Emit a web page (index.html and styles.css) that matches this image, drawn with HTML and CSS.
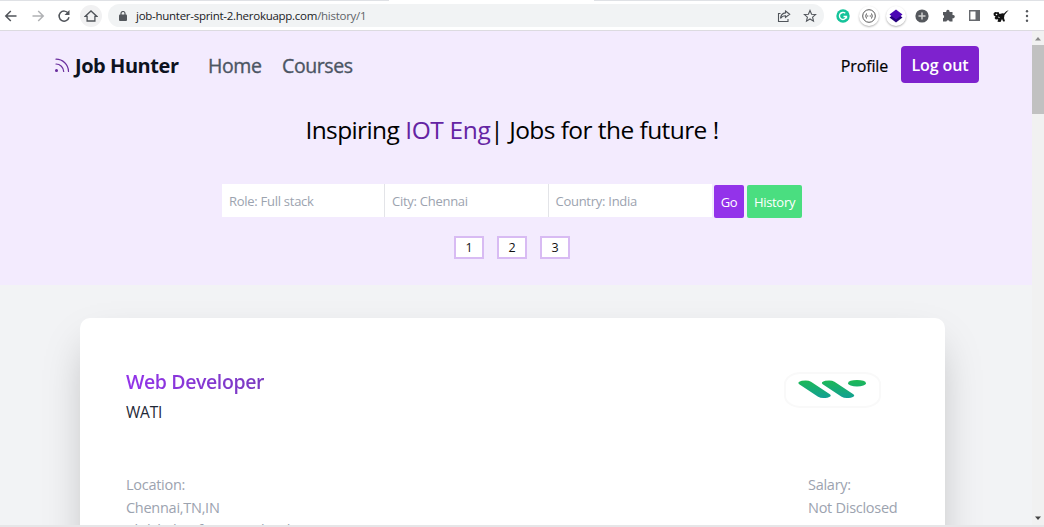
FILE: index.html
```html
<!DOCTYPE html>
<html lang="en">
<head>
<meta charset="utf-8">
<title>Job Hunter</title>
<link rel="stylesheet" href="styles.css">
</head>
<body>
<div class="window">
  <header class="toolbar">
    <nav class="nav-buttons">
      <span class="tool"><svg width="14" height="14" viewBox="0 0 14 14" class="line"><path d="M12.5 7H2M6.8 2 1.8 7l5 5"/></svg></span>
      <span class="tool faded"><svg width="14" height="14" viewBox="0 0 14 14" class="line"><path d="M1.5 7H12M7.2 2l5 5-5 5"/></svg></span>
      <span class="tool"><svg width="14" height="14" viewBox="0 0 14 14" class="line"><path d="M11.2 4.2A5 5 0 1 0 12 8.3"/><path d="M12.500 1v5h-5z" fill="#50545a" stroke="none"/></svg></span>
      <span class="tool"><span class="home"><svg width="14" height="14" viewBox="0 0 14 14" class="line house"><path d="M1.300 7.300 7 2l5.700 5.300H10.900V12H3.100V7.300z"/></svg></span></span>
    </nav>
    <div class="omnibox">
      <svg width="8" height="10" viewBox="0 0 8 10"><rect y="3.600" width="8" height="6.400" rx="1" fill="#54585d"/><path d="M2 4V2.500a2 2 0 0 1 4 0V4" fill="none" stroke="#54585d" stroke-width="1.200"/></svg>
      <span class="url">job-hunter-sprint-2.herokuapp.com<span class="path">/history/1</span></span>
      <svg class="share line thin" width="14" height="14" viewBox="0 0 14 14"><path d="M3.500 4.500H1.500v8h9.500v-2.500M8.500 2l4.200 3.200-4.200 3.200V6.700C6 6.700 4.700 7.500 3.500 9.400 3.800 6.300 5.500 4.200 8.500 3.900z"/></svg>
      <svg class="line thin" width="14" height="14" viewBox="0 0 14 14"><path d="m7 1.500 1.600 3.700 4 .35-3 2.650.9 3.900L7 10l-3.500 2.100.9-3.900-3-2.650 4-.35z"/></svg>
    </div>
    <div class="extensions">
      <span class="tool"><svg width="14" height="14" viewBox="0 0 14 14"><circle cx="7" cy="7" r="6.700" fill="#15c39a"/><path d="M9.300 4.300A3.500 3.500 0 1 0 10.300 8M7.500 7.500h3v2" fill="none" stroke="#fff" stroke-width="1.400"/></svg></span>
      <span class="tool"><span class="disc"><svg width="14" height="14" viewBox="0 0 14 14" fill="none" stroke="#444" stroke-width=".9"><circle cx="7" cy="7" r="6.300"/><path d="M4.500 4.500Q3 7 4.500 9.500M9.500 4.500Q11 7 9.500 9.500M5 7h1.300M7.700 7H9"/></svg></span></span>
      <span class="tool"><span class="disc"><svg width="14" height="14" viewBox="0 0 14 14"><path d="m7 3.500 6.500 5L7 13.500.5 8.500z" fill="#26007e"/><path d="m7 .5 6.500 5L7 10.500.5 5.500z" fill="#4a06b4"/></svg></span></span>
      <span class="tool"><svg width="14" height="14" viewBox="0 0 14 14"><circle cx="7" cy="7" r="6.600" fill="#55585d"/><path d="M7 3.500v7M3.500 7h7" stroke="#d0d0d0" stroke-width="1.500"/></svg></span>
      <span class="tool"><svg width="13" height="13" viewBox="0 0 13 13" fill="#55585d"><path d="M1 3h3.300a1.700 1.700 0 1 1 3.200 0H10.500v3a1.700 1.700 0 1 1 0 3.200v3.300H7.600a1.700 1.700 0 0 0-3.200 0H1V9.300a1.700 1.700 0 0 0 0-3.200z"/></svg></span>
      <span class="tool"><svg width="13" height="13" viewBox="0 0 13 13"><path d="M1.700 1.700h9.600v9.600H1.700z" fill="none" stroke="#66696e" stroke-width="1.400"/><path d="M7.500 1h4.500v11H7.500z" fill="#66696e"/></svg></span>
      <span class="tool"><svg width="16" height="14" viewBox="0 0 16 14"><path d="M.5 4.500 2 3l2 .3L5.500 3l1 2 3-.8 1.500.3L13 2.500 15.700 1l-2.400 2.700L11.500 6 11 9l1 3.300-1.800.2L9 10l-1.500 3-3-.3.7-2.500-2.400.2L1.500 9l1-1.500L.8 6.500z" fill="#111"/><circle cx="3.500" cy="5.500" r=".8" fill="#fff"/><path d="m5 8 1.700.6" stroke="#fff" stroke-width=".7"/></svg></span>
      <span class="tool"><svg width="4" height="14" viewBox="0 0 4 14" fill="#55585d"><circle cx="2" cy="2.200" r="1.200"/><circle cx="2" cy="7" r="1.200"/><circle cx="2" cy="11.800" r="1.200"/></svg></span>
    </div>
  </header>

  <div class="viewport">
    <main class="page">
      <section class="hero">
        <div class="navbar">
          <a class="brand"><svg width="16" height="15" viewBox="0 0 16 15" fill="none" stroke="#6b2f9e" stroke-width="1.200" stroke-linecap="round"><path d="M2 1.200A12.500 12.500 0 0 1 14.500 13.500M2 6A7.800 7.800 0 0 1 9.700 13.500"/><circle cx="2.500" cy="12.500" r=".9" fill="#6b2f9e"/></svg><span class="brand-name">Job Hunter</span></a>
          <a class="link home-link">Home</a>
          <a class="link courses-link">Courses</a>
          <a class="profile">Profile</a>
          <a class="logout">Log out</a>
        </div>
        <h1 class="headline">Inspiring <span class="typed">IOT Eng</span>| Jobs for the future !</h1>
        <form class="search">
          <div class="field">Role: Full stack</div>
          <div class="field">City: Chennai</div>
          <div class="field">Country: India</div>
          <span class="btn go">Go</span>
          <span class="btn history">History</span>
        </form>
        <div class="pager"><span>1</span><span>2</span><span>3</span></div>
      </section>
      <section class="results">
        <article class="card">
          <div class="card-top">
            <div>
              <h2 class="job-title">Web Developer</h2>
              <p class="company">WATI</p>
            </div>
            <svg class="logo" width="130" height="44" viewBox="0 0 130 44">
              <defs><linearGradient id="leaf" gradientUnits="userSpaceOnUse" x1="0" y1="12" x2="0" y2="30"><stop offset="0" stop-color="#1db954"/><stop offset="1" stop-color="#12a094"/></linearGradient></defs>
              <rect x="15" y="5" width="95" height="34" rx="16" ry="11" fill="#fff" stroke="#f9f9f9" stroke-width="2"/>
              <g transform="scale(2.700 1)" stroke="url(#leaf)" stroke-width="5" stroke-linecap="round">
                <path d="M13 15 20 27.500M21.700 15 28.700 27.500"/>
              </g>
              <ellipse cx="87" cy="15.200" rx="9" ry="3.300" fill="url(#leaf)"/>
            </svg>
          </div>
          <div class="card-bottom">
            <div><p>Location:</p><p>Chennai,TN,IN</p><p class="more">Click below for more details</p></div>
            <div class="salary"><p>Salary:</p><p>Not Disclosed</p></div>
          </div>
        </article>
      </section>
    </main>
    <aside class="scrollbar">
      <svg width="12" height="14" viewBox="0 0 12 14"><path d="M3 9.500h6L6 6z" fill="#8a8a8a"/></svg>
      <div class="thumb"></div>
      <svg class="down" width="12" height="14" viewBox="0 0 12 14"><path d="M3 5.500h6L6 9z" fill="#444"/></svg>
    </aside>
  </div>
  <footer class="status"></footer>
</div>
</body>
</html>
```
FILE: styles.css
```css
* { box-sizing: border-box; }
body { margin: 0; font-family: "Open Sans", "Noto Sans", sans-serif; }
h1, h2, p { margin: 0; font-weight: 400; }
svg { display: block; flex: none; }

.window { width: 1044px; height: 527px; display: flex; flex-direction: column; overflow: hidden; }

/* Browser toolbar */
.toolbar {
  height: 31px; flex: none; display: flex; align-items: center; background: #fff;
  padding-top: 1px;
  border-bottom: 1px solid #dcdbe0;
  background-image: linear-gradient(90deg, #dfe1e5 389px, #fff 389px, #fff 594px, #dfe1e5 594px);
  background-size: 100% 1px; background-repeat: no-repeat;
}
.line { fill: none; stroke: #50545a; stroke-width: 1.5; }
.thin { stroke-width: 1.1; }
.house { stroke-width: 1.3; }
.nav-buttons { display: flex; width: 106px; margin-left: -2px; }
.tool { flex: 1; height: 24px; display: flex; align-items: center; justify-content: center; }
.faded { opacity: .45; }
.home { width: 22px; height: 22px; border-radius: 50%; background: #f1f1f2; display: grid; place-items: center; }
.omnibox { width: 716px; height: 23px; margin-left: 4px; border-radius: 12px; background: #f1f3f4; display: flex; align-items: center; padding: 0 7px 0 11px; }
.url { margin-left: 9px; font-size: 11.5px; line-height: 16px; color: #202124; white-space: nowrap; letter-spacing: -.27px; }
.path { color: #5f6368; }
.share { margin-left: auto; margin-right: 12px; }
.extensions { display: flex; width: 210px; margin-left: 6px; }
.disc { width: 20px; height: 20px; border-radius: 50%; background: #fff; box-shadow: 0 1px 2px rgba(0, 0, 0, .3); display: grid; place-items: center; }

/* Page area */
.viewport { flex: 1; min-height: 0; display: flex; }
.page { width: 1032px; overflow: hidden; background: #f2f3f5; }
.hero { height: 254px; background: #f3ebfe; }
.navbar { height: 69px; display: flex; align-items: center; padding: 0 53px 0 54px; }
.brand { display: flex; align-items: center; gap: 5px; width: 154px; }
.brand-name { font-size: 20px; font-weight: 700; color: #0d1220; white-space: nowrap; letter-spacing: -.45px; }
.link { font-size: 19.5px; font-weight: 500; color: #4b5563; white-space: nowrap; letter-spacing: -.4px; -webkit-text-stroke: .35px #4b5563; }
.home-link { width: 74px; }
.profile { margin-left: auto; font-size: 16px; font-weight: 500; color: #000; letter-spacing: -.15px; -webkit-text-stroke: .2px #000; }
.logout { margin: -2px 0 0 13px; width: 78px; height: 37px; border-radius: 4px; background: #7e22ce; color: #fff; font-size: 16px; font-weight: 600; letter-spacing: -.1px; display: grid; place-items: center; white-space: nowrap; }
.headline { height: 62px; line-height: 60px; width: 1024px; text-align: center; font-size: 24.5px; letter-spacing: -.6px; word-spacing: .2px; color: #000; white-space: nowrap; }
.typed { color: #6424a3; letter-spacing: -.4px; }
.search { display: flex; margin: 22px 0 0 222px; height: 34px; }
.field { width: 163.500px; height: 33px; background: #fff; border-right: 1px solid #e3e4e8; padding-left: 7px; font-size: 13px; letter-spacing: -.27px; line-height: 35px; color: #9ca3af; }
.field:nth-child(1) { width: 163px; }
.field:nth-child(3) { border-right: 0; }
.btn { height: 33px; margin-top: 1px; border-radius: 2px; color: #fff; font-size: 13px; letter-spacing: -.3px; line-height: 34px; text-align: center; white-space: nowrap; }
.go { width: 30px; margin-left: 2px; background: #9333ea; }
.history { width: 55px; margin-left: 3px; background: #4ade80; }
.pager { display: flex; gap: 13px; margin: 18px 0 0 454px; }
.pager span { width: 30px; height: 23px; border: 2px solid #d8bbf3; background: #fff; font-size: 12.5px; line-height: 20px; text-align: center; color: #111; }

/* Job card */
.results { padding: 33px 0 0 80px; }
.card { width: 865px; height: 500px; border-radius: 10px; background: #fff; box-shadow: 0 21px 42px -10px rgba(0, 0, 0, .27); padding: 48px 46px 0; }
.card-top { display: flex; justify-content: space-between; height: 107px; }
.job-title { font-size: 19.5px; letter-spacing: -.4px; line-height: 31px; font-weight: 600; color: transparent; background: linear-gradient(90deg, #9333ea, #7a3cc0); background-clip: text; -webkit-background-clip: text; white-space: nowrap; }
.company { font-size: 15.5px; letter-spacing: -.2px; line-height: 30px; color: #1f2937; }
.logo { margin: 2px -1px 0 0; }
.card-bottom { display: flex; justify-content: space-between; font-size: 14.5px; letter-spacing: -.27px; line-height: 23px; color: #9ca3af; white-space: nowrap; }
.more { margin-top: -1px; letter-spacing: -.6px; }
.salary { width: 91px; }

/* Scrollbar and window edge */
.scrollbar { width: 12px; display: flex; flex-direction: column; background: #f1f1f1; }
.thumb { height: 69px; background: #c1c1c1; }
.down { margin-top: auto; }
.status { height: 2px; flex: none; background: #e6e6e8; }
```
